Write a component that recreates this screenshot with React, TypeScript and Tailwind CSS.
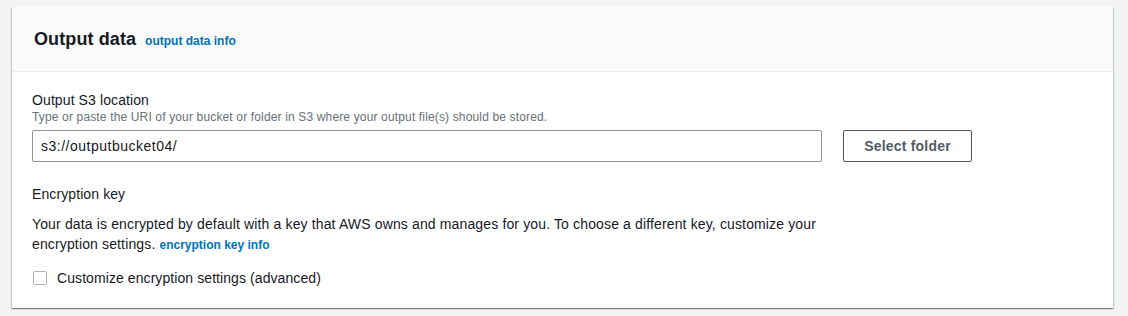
import React from "react";

export default function App() {
  return (
    <div
      className="min-h-[316px] w-[1128px] bg-[#f2f3f3] pl-3 pr-[15px] pt-[7px] pb-2"
      style={{ fontFamily: '"Liberation Sans", Arial, sans-serif' }}
    >
      <div className="bg-white shadow-[0_1px_1px_0_rgba(0,28,36,0.3),1px_1px_1px_0_rgba(0,28,36,0.15),-1px_1px_1px_0_rgba(0,28,36,0.15)]">
        <div className="flex items-baseline border-b border-[#eaeded] bg-[#fafafa] px-5 py-[21px]">
          <h2 className="pl-[2px] text-[18px] font-bold leading-[22px] tracking-[0.1px] text-[#16191f]">Output data</h2>
          <a className="ml-[9px] text-[12px] font-bold leading-[16px] text-[#0073bb]" href="#">
            output data info
          </a>
        </div>
        <div className="px-5 pt-[18px] pb-[20px]">
          <div className="text-[14px] leading-[20px] tracking-[0.1px] text-[#16191f]">Output S3 location</div>
          <div className="mt-[-1px] text-[12px] leading-[16px] tracking-[0.15px] text-[#687078]">
            Type or paste the URI of your bucket or folder in S3 where your output file(s) should be stored.
          </div>
          <div className="mt-[5px] flex items-center gap-[21px]">
            <div className="flex h-[32px] w-[790px] items-center rounded-[2px] border border-[#8d9699] bg-white px-2 text-[14px] tracking-[0.5px] text-[#16191f]">
              s3://outputbucket04/
            </div>
            <button className="flex h-[32px] w-[129px] items-center justify-center rounded-[2px] border border-[#545b64] bg-white text-[14px] font-bold tracking-[0.2px] text-[#545b64]">
              Select folder
            </button>
          </div>
          <div className="mt-[22px] text-[14px] leading-[20px] tracking-[0.1px] text-[#16191f]">Encryption key</div>
          <p className="mt-[10px] max-w-[800px] text-[14px] leading-[20px] tracking-[0.14px] text-[#16191f]">
            Your data is encrypted by default with a key that AWS owns and manages for you. To choose a different key,
            customize your encryption settings.{" "}
            <a className="text-[12px] font-bold tracking-normal text-[#0073bb]" href="#">
              encryption key info
            </a>
          </p>
          <label className="mt-[13px] flex items-center gap-[10px] text-[14px] leading-[20px] tracking-[0.08px] text-[#16191f]">
            <span className="ml-[1px] inline-block h-[14px] w-[14px] rounded-[2px] border border-[#aab7b8] bg-white" />
            Customize encryption settings (advanced)
          </label>
        </div>
      </div>
    </div>
  );
}
